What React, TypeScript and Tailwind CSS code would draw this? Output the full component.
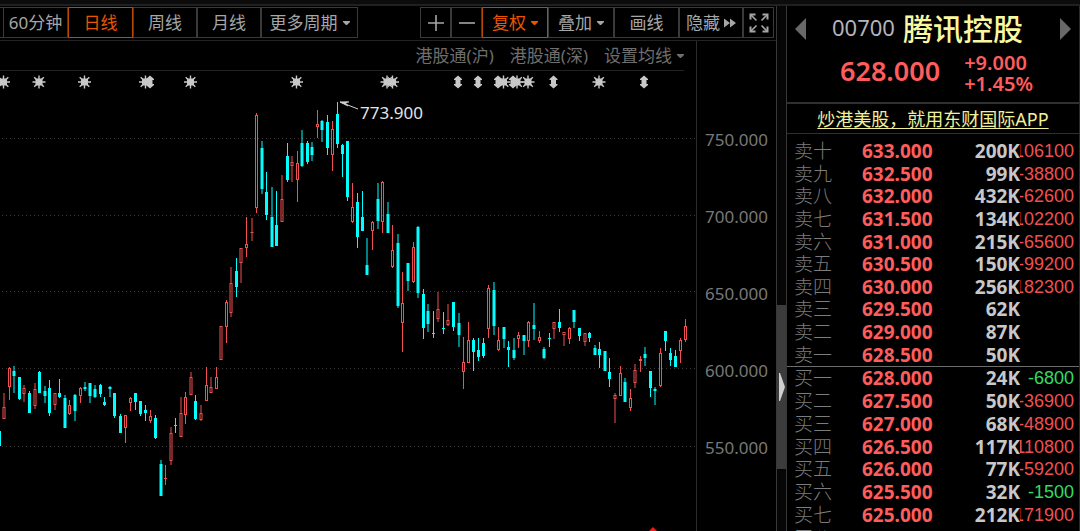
import React from "react";

type Dir = "u" | "d";
/** x centre, high, body top, body bottom, low, direction */
type Candle = [number, number, number, number, number, Dir];

const CANDLES: Candle[] = [
  [-0.5, 431, 431, 446, 446, "d"], [4, 393, 407, 419, 419, "u"], [9.5, 367, 368, 387, 400, "u"],
  [14, 366, 371, 376, 393, "d"], [19.5, 377, 377, 399, 400, "d"], [24, 385, 388, 394, 402, "u"],
  [29.5, 391, 393, 413, 413, "d"], [35, 383, 389, 406, 409, "u"], [39.5, 371, 372, 393, 393, "d"],
  [45, 386, 391, 396, 403, "d"], [49.5, 380, 388, 413, 416, "d"], [55, 393, 393, 405, 410, "u"],
  [59.5, 379, 393, 397, 398, "d"], [65, 395, 398, 428, 428, "d"], [69.5, 400, 405, 414, 415, "u"],
  [75, 394, 395, 411, 421, "d"], [80.5, 387, 388, 396, 403, "u"], [85, 382, 387, 389, 391, "d"],
  [90, 383, 383, 396, 403, "d"], [95, 385, 389, 397, 398, "d"], [100.5, 384, 385, 394, 397, "d"],
  [104.5, 397, 402, 405, 406, "d"], [110, 386, 387, 389, 397, "d"], [114.5, 393, 393, 416, 418, "d"],
  [120.5, 414, 416, 433, 433, "d"], [125.5, 415, 415, 428, 443, "u"], [130.5, 397, 398, 403, 411, "u"],
  [135.5, 393, 393, 402, 410, "d"], [140.5, 401, 401, 414, 416, "d"], [145.5, 405, 410, 413, 421, "d"],
  [150.5, 410, 416, 421, 423, "u"], [155.5, 415, 418, 438, 439, "d"], [161, 460, 464, 496, 496, "d"],
  [165.5, 465, 478, 479, 485, "u"], [171, 427, 433, 461, 465, "u"], [175.5, 418, 425, 426, 433, "d"],
  [181, 397, 413, 437, 437, "u"], [185.5, 392, 397, 415, 424, "u"], [191, 372, 377, 395, 395, "u"],
  [195.5, 395, 401, 419, 420, "d"], [201, 405, 413, 420, 421, "u"], [206.5, 367, 385, 401, 401, "u"],
  [211, 377, 387, 393, 393, "u"], [216.5, 367, 377, 389, 389, "u"], [221, 326, 326, 360, 360, "u"],
  [226.5, 300, 302, 327, 343, "u"], [231, 267, 283, 313, 317, "u"], [236.5, 258, 271, 287, 297, "d"],
  [241, 248, 248, 263, 283, "u"], [246.5, 217, 244, 248, 257, "u"], [252, 218, 232, 233, 241, "u"],
  [256.5, 113, 115, 208, 213, "u"], [262, 141, 148, 189, 194, "d"], [266.5, 172, 192, 215, 220, "d"],
  [272, 187, 217, 247, 247, "d"], [276.5, 191, 225, 246, 246, "d"], [282, 175, 199, 222, 222, "u"],
  [287.5, 143, 156, 180, 182, "d"], [292, 156, 162, 166, 182, "u"], [297.5, 151, 163, 180, 202, "u"],
  [302, 130, 143, 166, 167, "d"], [307.5, 141, 143, 162, 164, "d"], [312, 142, 147, 155, 161, "d"],
  [317.5, 110, 124, 127, 138, "u"], [322, 120, 121, 130, 142, "d"], [327.5, 115, 122, 148, 155, "d"],
  [332.5, 121, 129, 155, 171, "u"], [337.5, 102, 114, 144, 148, "d"], [342.5, 144, 145, 154, 177, "d"],
  [347.5, 141, 141, 197, 201, "d"], [352.5, 183, 207, 222, 223, "u"], [357.5, 193, 202, 237, 248, "d"],
  [362.5, 191, 217, 231, 231, "d"], [367, 238, 265, 275, 275, "d"], [372.5, 221, 222, 231, 250, "u"],
  [378, 183, 199, 221, 229, "d"], [382.5, 181, 182, 222, 233, "u"], [388, 202, 214, 233, 233, "d"],
  [392.5, 225, 250, 267, 268, "u"], [398, 234, 243, 306, 308, "d"], [402.5, 272, 303, 323, 352, "u"],
  [408, 263, 263, 281, 291, "d"], [413.5, 242, 247, 282, 283, "u"], [418, 226, 227, 293, 298, "d"],
  [423.5, 289, 294, 328, 339, "d"], [428, 304, 311, 324, 332, "d"], [433.5, 311, 333, 334, 338, "d"],
  [438, 292, 309, 319, 322, "u"], [443.5, 312, 328, 329, 334, "d"], [448, 304, 320, 325, 326, "u"],
  [453.5, 302, 302, 327, 331, "d"], [459, 313, 323, 335, 347, "d"], [463.5, 337, 362, 372, 389, "u"],
  [468.5, 322, 340, 363, 363, "u"], [473.5, 338, 340, 352, 371, "d"], [478.5, 338, 350, 357, 361, "d"],
  [483.5, 338, 343, 356, 358, "d"], [488.5, 285, 288, 329, 338, "u"], [494, 282, 290, 326, 335, "d"],
  [498.5, 327, 340, 350, 351, "u"], [504, 327, 327, 339, 348, "d"], [508.5, 341, 347, 350, 367, "d"],
  [514, 338, 350, 358, 360, "d"], [518.5, 332, 335, 339, 348, "u"], [524, 335, 335, 341, 355, "d"],
  [528.5, 321, 322, 341, 347, "u"], [534, 303, 325, 329, 340, "d"], [539.5, 331, 337, 341, 343, "u"],
  [544, 347, 349, 358, 359, "d"], [549.5, 333, 338, 339, 347, "d"], [554, 322, 322, 329, 339, "u"],
  [559.5, 309, 322, 328, 332, "d"], [564, 332, 332, 335, 346, "u"], [569.5, 327, 328, 339, 344, "u"],
  [574, 310, 310, 322, 328, "d"], [579.5, 328, 328, 336, 341, "d"], [585, 333, 333, 342, 346, "u"],
  [589.5, 332, 333, 338, 342, "d"], [595, 345, 348, 355, 355, "d"], [599.5, 342, 349, 355, 368, "d"],
  [605, 351, 351, 371, 371, "d"], [609.5, 358, 372, 379, 387, "d"], [615, 393, 395, 399, 423, "u"],
  [620.5, 366, 373, 396, 396, "u"], [625, 378, 382, 402, 402, "d"], [630.5, 389, 398, 408, 411, "u"],
  [635, 364, 370, 383, 388, "u"], [640.5, 356, 359, 361, 372, "u"], [645, 347, 354, 358, 366, "d"],
  [650.5, 371, 371, 388, 397, "d"], [655, 387, 389, 391, 405, "d"], [660.5, 348, 353, 386, 387, "u"],
  [665.5, 331, 331, 341, 351, "d"], [670.5, 348, 353, 360, 366, "d"], [675.5, 350, 356, 367, 367, "d"],
  [680.5, 338, 340, 351, 363, "u"], [685.5, 319, 326, 340, 342, "u"],
];

const GRID = [138, 215, 291, 368, 446];
const PRICES = ["750.000", "700.000", "650.000", "600.000", "550.000"];
const STARS = [3.5, 39, 84.5, 145.5, 190.5, 296.5, 387, 392.5, 503.5, 517, 528, 599];
const ARROWS = [150, 458, 478, 498, 513, 553.5, 644];

type Quote = [string, string, string, string, boolean?];
const SELL: Quote[] = [
  ["卖十", "633.000", "200K", "-106100"],
  ["卖九", "632.500", "99K", "-38800"],
  ["卖八", "632.000", "432K", "-62600"],
  ["卖七", "631.500", "134K", "-102200"],
  ["卖六", "631.000", "215K", "-65600"],
  ["卖五", "630.500", "150K", "-99200"],
  ["卖四", "630.000", "256K", "-182300"],
  ["卖三", "629.500", "62K", ""],
  ["卖二", "629.000", "87K", ""],
  ["卖一", "628.500", "50K", ""],
];
const BUY: Quote[] = [
  ["买一", "628.000", "24K", "-6800", true],
  ["买二", "627.500", "50K", "-36900"],
  ["买三", "627.000", "68K", "-48900"],
  ["买四", "626.500", "117K", "-110800"],
  ["买五", "626.000", "77K", "-59200"],
  ["买六", "625.500", "32K", "-1500", true],
  ["买七", "625.000", "212K", "-171900"],
  ["买八", "624.500", "75K", ""],
];

function Caret() {
  return (
    <svg width="7" height="4" viewBox="0 0 7 4" className="ml-px shrink-0" aria-hidden="true">
      <path d="M0 0H7V1L4 4H3L0 1Z" fill="currentColor" />
    </svg>
  );
}

function ToolButton({ width, active, label, children }: {
  width: string; active?: boolean; label?: string; children: React.ReactNode;
}) {
  const tone = active ? "border-[#b84a08] text-[#ea5500]" : "border-[#3a3a3a] text-[#a6a6a6]";
  return (
    <button
      type="button"
      aria-label={label}
      className={`flex h-full shrink-0 items-center justify-center gap-1 whitespace-nowrap border ${tone} ${width}`}
    >
      {children}
    </button>
  );
}

function Chart() {
  return (
    <svg className="block h-full w-full" role="img" aria-label="日线">
      <g transform="translate(0 -71)">
        {GRID.map((y) => (
          <line key={y} x1="2" x2="702" y1={y + 0.5} y2={y + 0.5} stroke="#3c3c3c" strokeDasharray="1 3" />
        ))}
        {STARS.map((x) => (
          <g key={x} transform={`translate(${x} 82)`} stroke="#c8c8c8" strokeWidth="1.4">
            <rect x="-3.5" y="-3.5" width="7" height="7" fill="#c8c8c8" stroke="none" />
            <path d="M0-6.5V6.5M-6.5 0H6.5M-4.8-4.8L4.8 4.8M4.8-4.8L-4.8 4.8" />
          </g>
        ))}
        {ARROWS.map((x) => (
          <path
            key={x}
            transform={`translate(${x} 82)`}
            d="M0-6.5L4-3V-2H2.5V2H4V3L0 6.5L-4 3V2H-2.5V-2H-4V-3Z"
            fill="#c8c8c8"
          />
        ))}
        {CANDLES.map(([x, high, top, bottom, low, dir]) =>
          dir === "d" ? (
            <g key={x} fill="#00ffff">
              <rect x={x - 0.5} y={high} width="1" height={low - high} />
              <rect x={x - 1.5} y={top} width="3" height={bottom - top} />
            </g>
          ) : (
            <g key={x} fill="#f05050">
              <rect x={x - 0.5} y={high} width="1" height={top - high} />
              <rect x={x - 0.5} y={bottom} width="1" height={low - bottom} />
              {bottom - top < 2 ? (
                <rect x={x - 1.5} y={top} width="3" height="1" />
              ) : (
                <rect x={x - 1} y={top + 0.5} width="2" height={bottom - top - 1} fill="none" stroke="#f05050" />
              )}
            </g>
          )
        )}
        <path d="M340 102L349 102M340 102L348 106M340 102L358 109" stroke="#d0d0d0" fill="none" />
        <path d="M340 102L349 101.5L346 103.5L349 106Z" fill="#d0d0d0" />
        <text x="360" y="119" fill="#e4e4e4" className="font-['Noto_Sans',sans-serif] text-[17px]">773.900</text>
        <path d="M649 531L653 527L657 531Z" fill="#f01818" />
      </g>
    </svg>
  );
}

function Book({ rows, height, caption }: { rows: Quote[]; height: string; caption: string }) {
  return (
    <table aria-label={caption} className={`w-full shrink-0 table-fixed border-collapse leading-[22px] ${height}`}>
      <colgroup>
        <col className="w-[75px]" />
        <col className="w-[72px]" />
        <col className="w-[86px]" />
        <col />
      </colgroup>
      <tbody>
        {rows.map(([label, price, volume, delta, green]) => (
          <tr key={label}>
            <th scope="row" className="p-0 pl-[7px] text-left text-[19px] font-light text-[#7c7c7c]">{label}</th>
            <td className="p-0 text-[19px] font-bold text-[#ff5c5c]">{price}</td>
            <td className="p-0 text-right text-[19px] font-bold text-[#c8c8c8]">{volume}</td>
            <td className="p-0 pr-[5px]">
              <div
                className={`flex h-[22px] justify-end overflow-hidden font-['Liberation_Sans',sans-serif] text-[18px] ${green ? "text-[#30dc60]" : "text-[#f05050]"}`}
              >
                {delta}
              </div>
            </td>
          </tr>
        ))}
      </tbody>
    </table>
  );
}

export default function App() {
  return (
    <div className="flex h-screen flex-col overflow-hidden bg-black font-['Noto_Sans','Noto_Sans_CJK_SC',sans-serif]">
      <div className="h-[6px] shrink-0 border-b-2 border-[#202020] bg-[#0c0c0c]" />
      <div className="flex min-h-0 flex-1">
        <main className="flex min-w-0 flex-1 flex-col">
          <div className="flex h-[35px] shrink-0 justify-between border-b border-[#222222] pt-px pr-[2px] pb-[2px] text-[17px]">
            <nav className="flex">
              <div className="w-[3px] border-y border-[#3a3a3a]" />
              <ToolButton width="w-[65px]">60分钟</ToolButton>
              <ToolButton width="w-[65px]" active>日线</ToolButton>
              <ToolButton width="w-[64px]">周线</ToolButton>
              <ToolButton width="w-[64px]">月线</ToolButton>
              <ToolButton width="w-[97px]">更多周期<Caret /></ToolButton>
            </nav>
            <div className="flex">
              <ToolButton width="w-[31px]" label="放大">
                <svg width="16" height="16" viewBox="0 0 16 16" aria-hidden="true">
                  <path d="M8 0V16M0 8H16" stroke="currentColor" strokeWidth="1.6" />
                </svg>
              </ToolButton>
              <ToolButton width="w-[31px]" label="缩小">
                <svg width="16" height="16" viewBox="0 0 16 16" aria-hidden="true">
                  <path d="M0 8H16" stroke="currentColor" strokeWidth="1.6" />
                </svg>
              </ToolButton>
              <ToolButton width="w-[66px]" active>复权<Caret /></ToolButton>
              <ToolButton width="w-[66px]">叠加<Caret /></ToolButton>
              <ToolButton width="w-[65px]">画线</ToolButton>
              <ToolButton width="w-[64px]">
                隐藏
                <svg width="12" height="10" viewBox="0 0 12 10" aria-hidden="true">
                  <path d="M0 0.5L6 5L0 9.5ZM6 0.5L12 5L6 9.5Z" fill="currentColor" />
                </svg>
              </ToolButton>
              <ToolButton width="w-[31px]" label="全屏">
                <svg width="20" height="20" viewBox="0 0 20 20" fill="none" stroke="currentColor" strokeWidth="2" aria-hidden="true">
                  <path d="M1.5 6.5V1.5H6.5M13.5 1.5H18.5V6.5M18.5 13.5V18.5H13.5M6.5 18.5H1.5V13.5" />
                  <path d="M2 2L7.5 7.5M18 2L12.5 7.5M18 18L12.5 12.5M2 18L7.5 12.5" strokeWidth="1.6" />
                </svg>
              </ToolButton>
            </div>
          </div>
          <div className="flex min-h-0 flex-1">
            <section className="flex min-w-0 flex-1 flex-col">
              <div className="mr-3 flex h-[30px] shrink-0 items-center justify-end gap-4 border-b border-[#222222] text-[17px] text-[#6e6e6e]">
                <button type="button">港股通(沪)</button>
                <button type="button">港股通(深)</button>
                <button type="button" className="flex items-center gap-1">设置均线<Caret /></button>
              </div>
              <div className="min-h-0 flex-1">
                <Chart />
              </div>
            </section>
            <div className="flex w-20 shrink-0 flex-col border-l border-[#2c2c2c] pt-[60px] pl-2 text-[17px] text-[#787878]">
              {PRICES.map((p) => (
                <div key={p} className="flex h-[77px] shrink-0 items-center">{p}</div>
              ))}
            </div>
          </div>
        </main>
        <div className="flex w-[11px] shrink-0 flex-col border-x border-[#383838] bg-[#060606] pt-[299px]">
          <button type="button" aria-label="收起" className="flex h-[164px] shrink-0 items-center justify-center bg-[#3c3c3c]">
            <svg width="6" height="28" viewBox="0 0 6 28" aria-hidden="true">
              <path d="M0 0H1L6 14L1 28H0Z" fill="#d0d0d0" />
            </svg>
          </button>
        </div>
        <aside className="flex w-[293px] shrink-0 flex-col border-r border-[#2c2c2c]">
          <header className="h-[98px] shrink-0 border-b-2 border-[#303030]">
            <div className="flex h-[46px] items-center px-2">
              <button type="button" aria-label="上一个">
                <svg width="11" height="22" viewBox="0 0 11 22" aria-hidden="true"><path d="M11 0V22L0 11Z" fill="#686868" /></svg>
              </button>
              <h1 className="flex flex-1 items-center gap-2 pl-[26px]">
                <span className="pb-1 text-[22px] text-[#b4b4bc]">00700</span>
                <span className="text-[30px] leading-none font-medium text-[#f8f8a0]">腾讯控股</span>
              </h1>
              <button type="button" aria-label="下一个">
                <svg width="11" height="22" viewBox="0 0 11 22" aria-hidden="true"><path d="M0 0V22L11 11Z" fill="#686868" /></svg>
              </button>
            </div>
            <div className="flex h-[42px] items-center gap-6 pl-[53px] text-[#ff5c5c]">
              <span className="pb-1 text-[27px] leading-[38px] font-semibold">628.000</span>
              <div className="text-[20px] leading-[21px] font-semibold">
                <div>+9.000</div>
                <div>+1.45%</div>
              </div>
            </div>
          </header>
          <div className="flex h-[30px] shrink-0 items-center justify-center border-b border-[#303030]">
            <a href="#app" className="text-[18px] leading-6 text-[#f0f09c] underline underline-offset-2">炒港美股，就用东财国际APP</a>
          </div>
          <div className="shrink-0 border-b border-[#6c6c6c] pt-[6px]">
            <Book rows={SELL} height="h-[226px]" caption="卖盘" />
          </div>
          <Book rows={BUY} height="h-[182px]" caption="买盘" />
        </aside>
      </div>
    </div>
  );
}
